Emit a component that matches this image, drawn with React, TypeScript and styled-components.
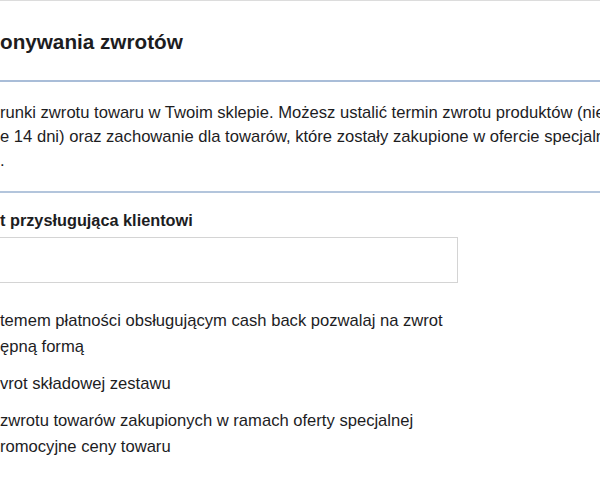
import styled, { createGlobalStyle } from 'styled-components'

const textColor = '#1d1d1f'
const blueLine = '#a9bdd8'

const GlobalStyle = createGlobalStyle`
  html, body {
    margin: 0;
    padding: 0;
    background: #fff;
    overflow: hidden;
  }
  body {
    font-family: 'Liberation Sans', Arial, sans-serif;
    color: ${textColor};
  }
`

const Page = styled.div`
  width: 600px;
  height: 480px;
  border-top: 1px solid #dcdcdc;
  background: #fff;
  overflow: hidden;
`

const Header = styled.header`
  padding: 29px 0 26px;
  border-bottom: 2px solid ${blueLine};
`

const Title = styled.h2`
  margin: 0;
  font-size: 20.7px;
  line-height: 24px;
  font-weight: 700;
  white-space: nowrap;
`

const Description = styled.p`
  margin: 0;
  padding: 19px 0 18px;
  font-size: 16.6px;
  line-height: 24px;
  white-space: nowrap;
  border-bottom: 2px solid #b3c5dc;
`

const Form = styled.section`
  padding-top: 17px;
  display: flex;
  flex-direction: column;
`

const Label = styled.label`
  font-size: 16.3px;
  line-height: 20px;
  font-weight: 700;
  white-space: nowrap;
`

const Input = styled.input`
  box-sizing: border-box;
  margin: 7px 0 0 -10px;
  width: 468px;
  height: 46px;
  border: 1px solid #d4d4d4;
  border-radius: 0;
  outline: none;
  background: #fff;
`

const Options = styled.ul`
  list-style: none;
  margin: 25px 0 0;
  padding: 0;
  display: flex;
  flex-direction: column;
  gap: 11px;
`

const Option = styled.li`
  font-size: 16.6px;
  line-height: 26px;
  white-space: nowrap;
`

const options = [
  ['temem płatności obsługującym cash back pozwalaj na zwrot', 'ępną formą'],
  ['vrot składowej zestawu'],
  ['zwrotu towarów zakupionych w ramach oferty specjalnej', 'romocyjne ceny towaru'],
]

export default function App() {
  return (
    <Page>
      <GlobalStyle />
      <Header>
        <Title>onywania zwrotów</Title>
      </Header>

      <Description>
        runki zwrotu towaru w Twoim sklepie. Możesz ustalić termin zwrotu produktów (nie
        <br />
        e 14 dni) oraz zachowanie dla towarów, które zostały zakupione w ofercie specjalnej
        <br />.
      </Description>

      <Form>
        <Label htmlFor="days">t przysługująca klientowi</Label>
        <Input id="days" type="text" />

        <Options>
          {options.map((lines) => (
            <Option key={lines[0]}>
              {lines.map((line, i) => (
                <span key={line}>
                  {i > 0 && <br />}
                  {line}
                </span>
              ))}
            </Option>
          ))}
        </Options>
      </Form>
    </Page>
  )
}
